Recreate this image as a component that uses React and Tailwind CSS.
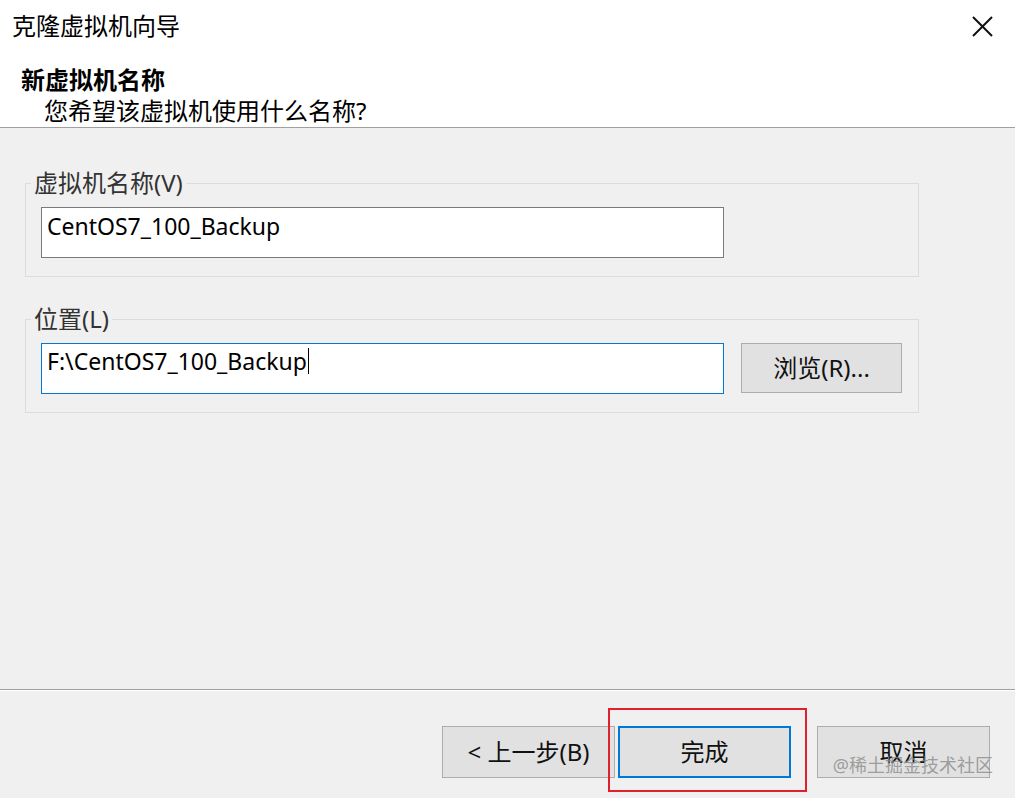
import { useState } from 'react'

const FONT = 'font-["Noto_Sans","Noto_Sans_CJK_SC",sans-serif]'

function GroupBox({ label, children }) {
  return (
    <fieldset className="ml-[25px] h-[106px] w-[894px] border border-[#dcdcdc] px-[15px] pt-0 pb-0">
      <legend className="ml-[-10px] px-[3px] text-[24px] leading-[24px] text-[#333]">
        {label}
      </legend>
      <div className="mt-[12px] flex items-start gap-[17px]">{children}</div>
    </fieldset>
  )
}

function Button({ children, focused = false }) {
  return (
    <button
      className={
        'h-[52px] w-[173px] bg-[#e1e1e1] text-[24px] text-[#111] ' +
        (focused ? 'border-2 border-[#0078d7]' : 'border border-[#adadad]')
      }
    >
      {children}
    </button>
  )
}

export default function App() {
  const [name, setName] = useState('CentOS7_100_Backup')

  return (
    <div className={`flex h-[798px] w-[1015px] flex-col bg-[#f0f0f0] ${FONT}`}>
      {/* header */}
      <div className="relative h-[128px] border-b border-[#a0a0a0] bg-white">
        <div className="pl-[12px] pt-[8px] text-[24px] leading-[36px] text-black">
          克隆虚拟机向导
        </div>
        <svg
          className="absolute right-[22px] top-[16px]"
          width="21"
          height="21"
          viewBox="0 0 21 21"
        >
          <path d="M1 1 L20 20 M20 1 L1 20" stroke="#111" strokeWidth="2" />
        </svg>
        <div className="mt-[22px] pl-[21px] text-[24px] font-bold leading-[28px] text-black">
          新虚拟机名称
        </div>
        <div className="pl-[44px] pt-[2px] text-[24px] leading-[30px] text-black">
          您希望该虚拟机使用什么名称?
        </div>
      </div>

      {/* body */}
      <div className="flex flex-1 flex-col gap-[30px] pt-[43px]">
        <GroupBox label="虚拟机名称(V)">
          <input
            value={name}
            onChange={(e) => setName(e.target.value)}
            className="h-[51px] w-[683px] border border-[#7a7a7a] bg-white px-[5px] pb-[14px] text-[23px] text-black outline-none"
          />
        </GroupBox>
        <GroupBox label="位置(L)">
          <div className="flex h-[51px] w-[683px] items-start border border-[#0078d7] bg-white px-[5px] text-[23px] leading-[34px] text-black">
            <span>F:\CentOS7_100_Backup</span>
            <span className="ml-px mt-[4px] h-[26px] w-px bg-black" />
          </div>
          <button className="h-[50px] w-[161px] border border-[#adadad] bg-[#e1e1e1] text-[24px] text-[#111]">
            浏览(R)...
          </button>
        </GroupBox>
      </div>

      {/* footer */}
      <div className="relative h-[109px] border-t border-[#a0a0a0]">
        <div className="h-px bg-white" />
        <div className="flex justify-end pr-[25px] pt-[35px]">
          <Button>&lt; 上一步(B)</Button>
          <div className="relative ml-[3px]">
            <Button focused>完成</Button>
            <div className="pointer-events-none absolute -bottom-[14px] -left-[10px] -right-[16px] -top-[18px] border-2 border-[#e0202a]" />
          </div>
          <div className="ml-[26px]">
            <Button>取消</Button>
          </div>
        </div>
        <div className="pointer-events-none absolute bottom-[22px] right-[22px] text-[18px] leading-[22px] text-[#8a8a8a]/80">
          @稀土掘金技术社区
        </div>
      </div>
    </div>
  )
}
